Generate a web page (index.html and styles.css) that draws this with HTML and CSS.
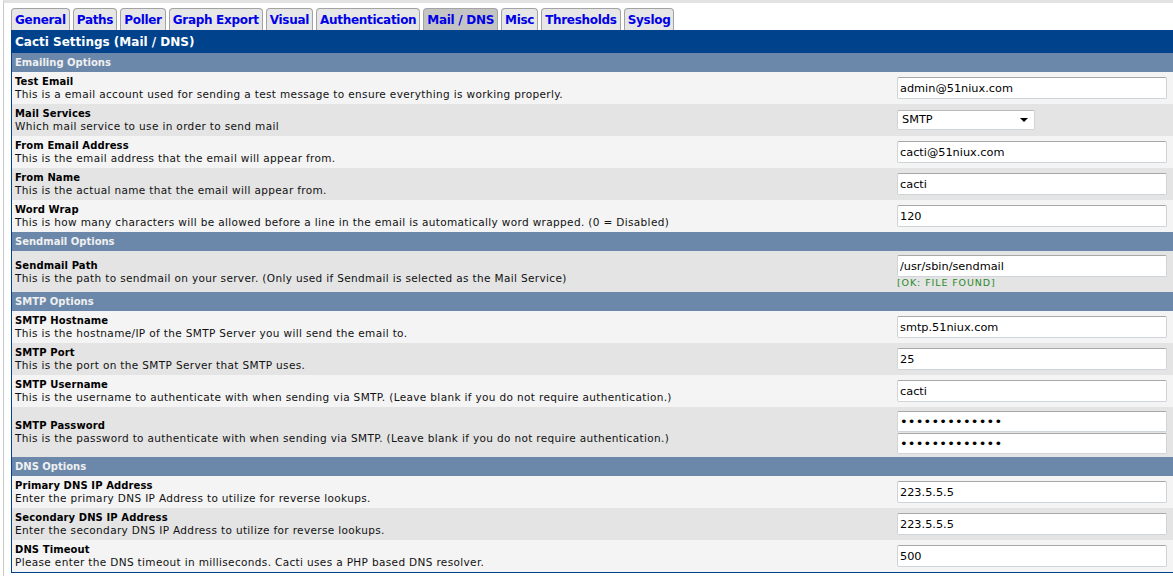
FILE: index.html
```html
<!DOCTYPE html>
<html lang="en">
<head>
  <meta charset="UTF-8">
  <title>Cacti Settings (Mail / DNS)</title>
  <link rel="stylesheet" href="styles.css">
</head>
<body>
  <div class="frame">
    <!-- settings tabs -->
    <ul class="tabs">
      <li><a href="#">General</a></li>
      <li><a href="#">Paths</a></li>
      <li><a href="#">Poller</a></li>
      <li><a href="#">Graph Export</a></li>
      <li><a href="#">Visual</a></li>
      <li><a href="#">Authentication</a></li>
      <li class="selected"><a href="#">Mail / DNS</a></li>
      <li><a href="#">Misc</a></li>
      <li><a href="#">Thresholds</a></li>
      <li><a href="#">Syslog</a></li>
    </ul>

    <div class="settings">
      <div class="title">Cacti Settings (Mail / DNS)</div>

      <div class="section">Emailing Options</div>
      <div class="row odd">
        <div class="label"><b>Test Email</b><span>This is a email account used for sending a test message to ensure everything is working properly.</span></div>
        <div class="field"><input type="text" value="admin@51niux.com"></div>
      </div>
      <div class="row even">
        <div class="label"><b>Mail Services</b><span>Which mail service to use in order to send mail</span></div>
        <div class="field"><div class="select">SMTP<i class="caret"></i></div></div>
      </div>
      <div class="row odd">
        <div class="label"><b>From Email Address</b><span>This is the email address that the email will appear from.</span></div>
        <div class="field"><input type="text" value="cacti@51niux.com"></div>
      </div>
      <div class="row even">
        <div class="label"><b>From Name</b><span>This is the actual name that the email will appear from.</span></div>
        <div class="field"><input type="text" value="cacti"></div>
      </div>
      <div class="row odd">
        <div class="label"><b>Word Wrap</b><span>This is how many characters will be allowed before a line in the email is automatically word wrapped. (0 = Disabled)</span></div>
        <div class="field"><input type="text" value="120"></div>
      </div>

      <div class="section">Sendmail Options</div>
      <div class="row even">
        <div class="label"><b>Sendmail Path</b><span>This is the path to sendmail on your server. (Only used if Sendmail is selected as the Mail Service)</span></div>
        <div class="field"><input type="text" value="/usr/sbin/sendmail"><div class="found">[OK: FILE FOUND]</div></div>
      </div>

      <div class="section">SMTP Options</div>
      <div class="row odd">
        <div class="label"><b>SMTP Hostname</b><span>This is the hostname/IP of the SMTP Server you will send the email to.</span></div>
        <div class="field"><input type="text" value="smtp.51niux.com"></div>
      </div>
      <div class="row even">
        <div class="label"><b>SMTP Port</b><span>This is the port on the SMTP Server that SMTP uses.</span></div>
        <div class="field"><input type="text" value="25"></div>
      </div>
      <div class="row odd">
        <div class="label"><b>SMTP Username</b><span>This is the username to authenticate with when sending via SMTP. (Leave blank if you do not require authentication.)</span></div>
        <div class="field"><input type="text" value="cacti"></div>
      </div>
      <div class="row even tall">
        <div class="label"><b>SMTP Password</b><span>This is the password to authenticate with when sending via SMTP. (Leave blank if you do not require authentication.)</span></div>
        <div class="field">
          <input type="password" value="cactipassword">
          <input type="password" value="cactipassword">
        </div>
      </div>

      <div class="section">DNS Options</div>
      <div class="row odd">
        <div class="label"><b>Primary DNS IP Address</b><span>Enter the primary DNS IP Address to utilize for reverse lookups.</span></div>
        <div class="field"><input type="text" value="223.5.5.5"></div>
      </div>
      <div class="row even">
        <div class="label"><b>Secondary DNS IP Address</b><span>Enter the secondary DNS IP Address to utilize for reverse lookups.</span></div>
        <div class="field"><input type="text" value="223.5.5.5"></div>
      </div>
      <div class="row odd">
        <div class="label"><b>DNS Timeout</b><span>Please enter the DNS timeout in milliseconds. Cacti uses a PHP based DNS resolver.</span></div>
        <div class="field"><input type="text" value="500"></div>
      </div>
    </div>
  </div>
</body>
</html>
```

FILE: styles.css
```css
body {
  margin: 0;
  overflow: hidden;
  background-color: #fff;
  font-family: "DejaVu Sans", Verdana, sans-serif;
  color: #000;
}

.frame {
  margin-left: 3px;
  border-top: 3px solid #e2e2e2;
  border-left: 1px solid #c8c8c8;
  padding: 5px 0 0 7px;
  height: 568px;
  overflow: hidden;
}

.tabs {
  list-style: none;
  margin: 0;
  padding: 0;
  display: flex;
  gap: 3px;
  height: 22px;
}

.tabs li {
  background-color: #e6e6e6;
  border: 1px solid #a3a3a3;
  border-bottom: none;
  border-radius: 4px 4px 0 0;
  padding: 0 3px;
  display: flex;
  align-items: center;
}

.tabs li.selected {
  background-color: #c4c4c4;
}

.tabs a {
  color: #0000e6;
  text-decoration: none;
  font-weight: bold;
  font-size: 12px;
  letter-spacing: -0.3px;
}

.settings {
  width: 1190px;
  border: 1px solid #00438c;
}

.title {
  background-color: #00438c;
  color: #fff;
  font-weight: bold;
  font-size: 12px;
  height: 22px;
  line-height: 22px;
  padding-left: 3px;
}

.section {
  background-color: #6b88ab;
  color: #f0f0f0;
  font-weight: bold;
  font-size: 10px;
  height: 19px;
  line-height: 19px;
  padding-left: 3px;
}

.row {
  display: grid;
  grid-template-columns: 1fr 305px;
  align-items: center;
  min-height: 32px;
}

.row.odd {
  background-color: #f4f4f4;
}

.row.even {
  background-color: #e4e4e4;
}

.row.tall {
  min-height: 50px;
}

.label {
  padding-left: 3px;
  font-size: 10.5px;
  line-height: 13px;
  letter-spacing: 0.35px;
  color: #111;
}

.label b {
  display: block;
  color: #000;
  font-size: 10px;
  letter-spacing: 0.1px;
}

.label span {
  display: block;
}

.field {
  padding: 4px 0;
}

.field input {
  display: block;
  box-sizing: border-box;
  width: 270px;
  height: 22px;
  margin: 0;
  padding: 1px 2px 0;
  border: 1px solid #cfd4d9;
  border-top-color: #a8a8a8;
  border-radius: 2px;
  background-color: #fff;
  font-family: "DejaVu Sans", Verdana, sans-serif;
  font-size: 11.3px;
  color: #000;
}

.row.tall .field {
  padding: 3px 0;
}

.row.tall .field input {
  height: 21px;
  font-size: 13px;
  letter-spacing: 0.2px;
}

.field input + input {
  margin-top: 1px;
}

.select {
  box-sizing: border-box;
  width: 138px;
  height: 20px;
  border: 1px solid #cfd4d9;
  border-top-color: #bbb;
  border-radius: 2px;
  background-color: #fff;
  font-size: 11.3px;
  line-height: 18px;
  padding-left: 4px;
  display: flex;
  justify-content: space-between;
  align-items: center;
}

.caret {
  width: 0;
  height: 0;
  border-left: 4px solid transparent;
  border-right: 4px solid transparent;
  border-top: 4px solid #000;
  margin-right: 6px;
}

.found {
  color: #2a8a2a;
  font-size: 9.5px;
  line-height: 11px;
  letter-spacing: 0.9px;
}
```
